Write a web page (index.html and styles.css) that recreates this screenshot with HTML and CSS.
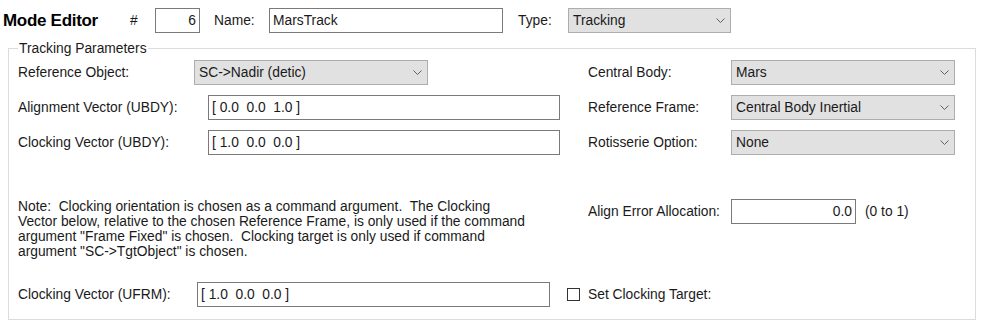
FILE: index.html
```html
<!DOCTYPE html>
<html lang="en">
<head>
  <meta charset="UTF-8" />
  <meta name="viewport" content="width=device-width, initial-scale=1.0"/>
  <title>Mode Editor</title>
  <link rel="stylesheet" href="styles.css">
</head>
<body>
  <div class="header">
    <div class="title">Mode Editor</div>
    <div class="hash">#</div>
    <input class="field num" type="text" value="6" />
    <div class="lbl name-lbl">Name:</div>
    <input class="field name" type="text" value="MarsTrack" />
    <div class="lbl type-lbl">Type:</div>
    <div class="combo type">
      <span>Tracking</span>
      <svg width="9" height="5" viewBox="0 0 9 5"><path d="M0.5 0.5 L4.5 4.5 L8.5 0.5" fill="none" stroke="#606060" stroke-width="1"/></svg>
    </div>
  </div>

  <fieldset class="group">
    <legend>Tracking Parameters</legend>

    <div class="row r1">
      <div class="left">
        <div class="lbl w-ref">Reference Object:</div>
        <div class="combo refobj">
          <span>SC-&gt;Nadir (detic)</span>
          <svg width="9" height="5" viewBox="0 0 9 5"><path d="M0.5 0.5 L4.5 4.5 L8.5 0.5" fill="none" stroke="#606060" stroke-width="1"/></svg>
        </div>
      </div>
      <div class="right">
        <div class="lbl w-right">Central Body:</div>
        <div class="combo side">
          <span>Mars</span>
          <svg width="9" height="5" viewBox="0 0 9 5"><path d="M0.5 0.5 L4.5 4.5 L8.5 0.5" fill="none" stroke="#606060" stroke-width="1"/></svg>
        </div>
      </div>
    </div>

    <div class="row">
      <div class="left">
        <div class="lbl w-vec">Alignment Vector (UBDY):</div>
        <input class="field vec" type="text" value="[ 0.0  0.0  1.0 ]" />
      </div>
      <div class="right">
        <div class="lbl w-right">Reference Frame:</div>
        <div class="combo side">
          <span>Central Body Inertial</span>
          <svg width="9" height="5" viewBox="0 0 9 5"><path d="M0.5 0.5 L4.5 4.5 L8.5 0.5" fill="none" stroke="#606060" stroke-width="1"/></svg>
        </div>
      </div>
    </div>

    <div class="row">
      <div class="left">
        <div class="lbl w-vec">Clocking Vector (UBDY):</div>
        <input class="field vec" type="text" value="[ 1.0  0.0  0.0 ]" />
      </div>
      <div class="right">
        <div class="lbl w-right">Rotisserie Option:</div>
        <div class="combo side">
          <span>None</span>
          <svg width="9" height="5" viewBox="0 0 9 5"><path d="M0.5 0.5 L4.5 4.5 L8.5 0.5" fill="none" stroke="#606060" stroke-width="1"/></svg>
        </div>
      </div>
    </div>

    <div class="row r4">
      <div class="left">
        <p class="note">Note:&nbsp; Clocking orientation is chosen as a command argument.&nbsp; The Clocking<br>Vector below, relative to the chosen Reference Frame, is only used if the command<br>argument "Frame Fixed" is chosen.&nbsp; Clocking target is only used if command<br>argument "SC-&gt;TgtObject" is chosen.</p>
      </div>
      <div class="right align">
        <div class="lbl w-right">Align Error Allocation:</div>
        <input class="field err" type="text" value="0.0" />
        <div class="lbl range">(0 to 1)</div>
      </div>
    </div>

    <div class="row r5">
      <div class="left">
        <div class="lbl w-ufrm">Clocking Vector (UFRM):</div>
        <input class="field ufrm" type="text" value="[ 1.0  0.0  0.0 ]" />
        <span class="check"></span>
      </div>
      <div class="right">
        <div class="lbl">Set Clocking Target:</div>
      </div>
    </div>
  </fieldset>
</body>
</html>
```

FILE: styles.css
```css
body {
  margin: 0;
  padding: 0 0 0 3px;
  background: #ffffff;
  color: #1a1a1a;
  font-family: 'Liberation Sans', Arial, sans-serif;
  font-size: 13.8px;
}

.header {
  display: flex;
  align-items: center;
  height: 41px;
}

.title {
  width: 127px;
  font-size: 17px;
  font-weight: bold;
  color: #000;
  letter-spacing: -0.3px;
}

.hash {
  width: 25px;
}

.lbl {
  white-space: nowrap;
}

.field {
  box-sizing: border-box;
  height: 25px;
  margin: 0;
  padding: 0 3px;
  border: 1px solid #7a7a7a;
  background: #fff;
  font-family: inherit;
  font-size: 13.8px;
  color: #1a1a1a;
  outline: none;
}

.num {
  width: 45px;
  text-align: right;
}

.name-lbl {
  margin-left: 14px;
  width: 55px;
}

.name {
  width: 234px;
}

.type-lbl {
  margin-left: 15px;
  width: 50px;
}

.combo {
  box-sizing: border-box;
  display: flex;
  align-items: center;
  justify-content: space-between;
  height: 25px;
  padding: 0 5px 0 4px;
  background: #e1e1e1;
  border: 1px solid #adadad;
}

.combo svg {
  flex: none;
}

.type {
  width: 163px;
}

.group {
  box-sizing: border-box;
  width: 968px;
  height: 279px;
  margin: 0 0 0 5px;
  padding: 0 0 0 9px;
  border: 1px solid #dcdcdc;
}

.group legend {
  padding: 0 1px;
  line-height: 15px;
}

.row {
  display: flex;
  align-items: center;
  height: 25px;
  margin-top: 10px;
}

.r1 {
  margin-top: 4px;
}

.left {
  display: flex;
  align-items: center;
  width: 570px;
}

.right {
  display: flex;
  align-items: center;
}

.w-ref {
  width: 176px;
}

.refobj {
  width: 234px;
}

.w-vec {
  width: 190px;
}

.vec {
  width: 352px;
}

.w-right {
  width: 143px;
}

.side {
  width: 224px;
}

.r4 {
  align-items: flex-start;
  height: 60px;
  margin-top: 44px;
}

.note {
  margin: 0;
  white-space: nowrap;
  line-height: 15px;
}

.err {
  width: 125px;
  text-align: right;
}

.range {
  margin-left: 9px;
}

.r5 {
  margin-top: 23px;
}

.w-ufrm {
  width: 179px;
}

.ufrm {
  width: 353px;
}

.check {
  box-sizing: border-box;
  width: 13px;
  height: 13px;
  margin-left: 17px;
  border: 1px solid #333;
}
```
